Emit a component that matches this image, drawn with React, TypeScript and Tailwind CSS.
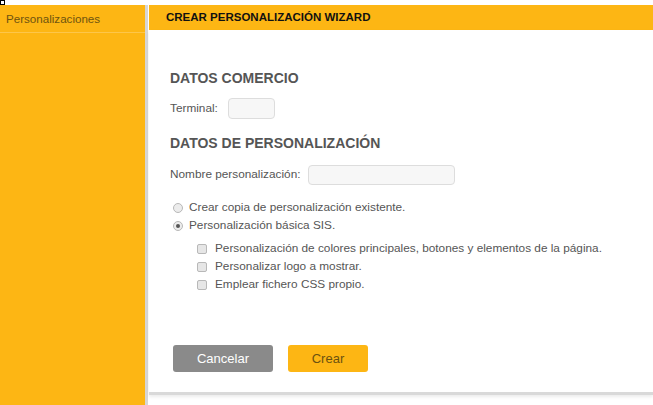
import React from "react";

const yellow = "bg-[#fdb614]";

function Radio({ checked, label }: { checked?: boolean; label: string }) {
  return (
    <label className="flex items-center h-[18px] gap-[6px]">
      <span className="w-[10px] h-[10px] rounded-full border border-[#b8b8b8] bg-[#ececec] flex items-center justify-center">
        {checked && <span className="w-[4px] h-[4px] rounded-full bg-[#555]" />}
      </span>
      <span>{label}</span>
    </label>
  );
}

function Check({ label }: { label: string }) {
  return (
    <label className="flex items-center h-[18px] gap-[8px]">
      <span className="w-[10px] h-[10px] rounded-[2px] border border-[#b8b8b8] bg-[#e6e6e6]" />
      <span>{label}</span>
    </label>
  );
}

export default function App() {
  return (
    <div className="relative h-screen w-full bg-white pt-[5px] flex font-['Liberation_Sans',Arial,sans-serif] overflow-hidden">
      <div className="absolute left-0 top-0 w-[5px] h-[5px] border border-black bg-white" />

      {/* Menú lateral */}
      <aside className={`w-[148px] ${yellow} border-r-[3px] border-[#d6d6d6]`}>
        <div className="h-[28px] border-b border-[#fdc64a] px-[6px] flex items-center text-[11.6px] text-[#6e5410]">
          Personalizaciones
        </div>
      </aside>

      {/* Panel */}
      <main className="flex-1 ml-[1px] flex flex-col">
        <div className={`h-[25px] ${yellow} flex items-center px-[17px] text-[11.5px] font-bold text-[#111]`}>
          CREAR PERSONALIZACIÓN WIZARD
        </div>
        <div className="h-[365px] bg-white border-b-[3px] border-[#d9d9d9] shadow-[0_2px_3px_rgba(0,0,0,0.08)] pl-[21px] pt-[38px] text-[11.8px] text-[#555]">
          <h2 className="h-[20px] leading-[20px] text-[14px] font-bold text-[#555]">DATOS COMERCIO</h2>
          <div className="mt-[10px] flex items-center gap-[10px]">
            <span>Terminal:</span>
            <input className="w-[47px] h-[21px] rounded-[4px] border border-[#ddd] bg-[#f7f7f7]" />
          </div>

          <h2 className="mt-[14px] h-[20px] leading-[20px] text-[14px] font-bold text-[#555]">DATOS DE PERSONALIZACIÓN</h2>
          <div className="mt-[12px] flex items-center gap-[7px]">
            <span>Nombre personalización:</span>
            <input className="w-[147px] h-[20px] rounded-[4px] border border-[#ddd] bg-[#f7f7f7]" />
          </div>

          <div className="mt-[14px] pl-[3px]">
            <Radio label="Crear copia de personalización existente." />
            <Radio checked label="Personalización básica SIS." />
          </div>
          <div className="mt-[5px] pl-[27px]">
            <Check label="Personalización de colores principales, botones y elementos de la página." />
            <Check label="Personalizar logo a mostrar." />
            <Check label="Emplear fichero CSS propio." />
          </div>

          <div className="mt-[51px] pl-[3px] flex gap-[15px] text-[13px]">
            <button className="w-[100px] h-[27px] rounded-[3px] bg-[#8a8a8a] text-white">Cancelar</button>
            <button className={`w-[80px] h-[27px] rounded-[3px] ${yellow} text-[#6b5210]`}>Crear</button>
          </div>
        </div>
      </main>
    </div>
  );
}
